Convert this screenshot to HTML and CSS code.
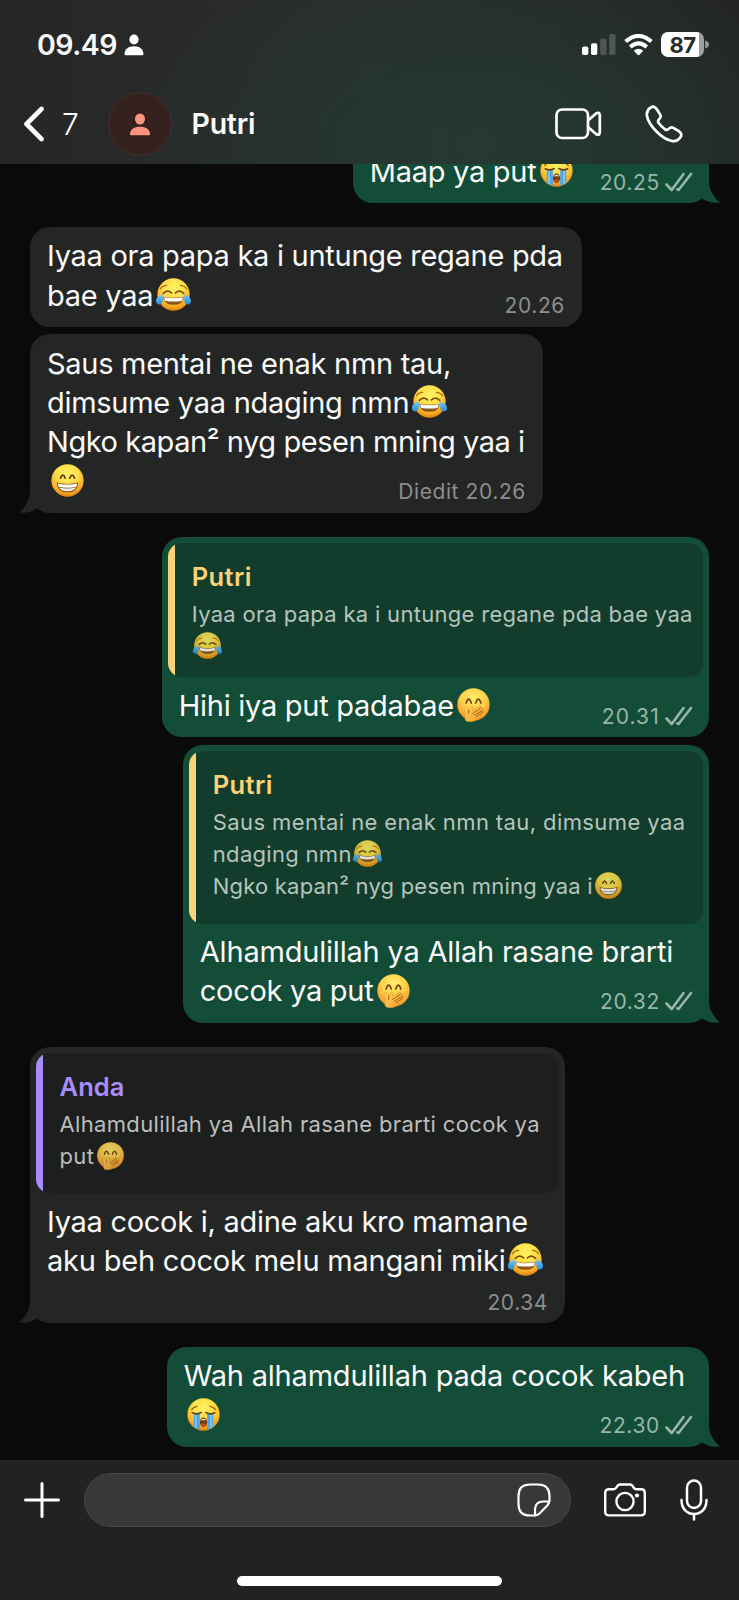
FILE: index.html
```html
<!DOCTYPE html>
<html lang="id">
<head>
<meta charset="utf-8">
<title>Putri</title>
<link rel="stylesheet" href="styles.css">
</head>
<body>
<svg class="defs" width="0" height="0" aria-hidden="true">
  <defs>
    <radialGradient id="face" cx=".5" cy=".3" r=".72">
      <stop offset="0" stop-color="#fff265"/><stop offset=".45" stop-color="#ffdf48"/><stop offset=".8" stop-color="#f9ab22"/><stop offset="1" stop-color="#d97b0c"/>
    </radialGradient>
    <radialGradient id="blush" cx=".5" cy=".3" r=".74">
      <stop offset="0" stop-color="#ffee70"/><stop offset=".5" stop-color="#ffd149"/><stop offset=".85" stop-color="#f99d30"/><stop offset="1" stop-color="#e2720f"/>
    </radialGradient>
    <linearGradient id="tear" x1="0" y1="0" x2="0" y2="1">
      <stop offset="0" stop-color="#72c8f5"/><stop offset="1" stop-color="#268fdc"/>
    </linearGradient>
    <linearGradient id="hand" x1="0" y1="0" x2="1" y2="1">
      <stop offset="0" stop-color="#ffd65c"/><stop offset="1" stop-color="#f39a2b"/>
    </linearGradient>
  </defs>
  <symbol id="joy" viewBox="0 0 36 36">
    <circle cx="18" cy="18" r="16.6" fill="url(#face)"/>
    <path d="M4.5 12.2Q7 8.6 11 8.6M31.500 12.200Q29 8.600 25 8.600" fill="none" stroke="#a96b12" stroke-width="1.200" stroke-linecap="round"/>
    <path d="M7.500 16.800Q11.500 12.500 16 16.300M28.500 16.800Q24.500 12.500 20 16.300" fill="none" stroke="#7d4a10" stroke-width="1.700" stroke-linecap="round"/>
    <path d="M7.500 20.200Q18 22.500 28.500 20.200Q28 28.600 18 28.600Q8 28.600 7.500 20.200Z" fill="#8d5418"/>
    <path d="M8.500 20.900Q18 23 27.500 20.900Q27.300 23.900 26.300 24.600Q18 26 9.700 24.600Q8.600 23.700 8.500 20.900Z" fill="#fff"/>
    <path d="M7 18.200C3 18.500 0 21.500 0 25C0 28 3.600 29.500 5.700 27.200C7.600 25 7 21.500 7 18.200Z" fill="url(#tear)"/>
    <path d="M29 18.200C33 18.500 36 21.500 36 25C36 28 32.400 29.500 30.300 27.200C28.400 25 29 21.500 29 18.200Z" fill="url(#tear)"/>
  </symbol>
  <symbol id="grin" viewBox="0 0 36 36">
    <circle cx="18" cy="18" r="16.600" fill="url(#face)"/>
    <path d="M10.800 15.500Q13.300 9.500 15.600 15.500M20.400 15.500Q22.700 9.500 25.200 15.500" fill="none" stroke="#6b3c0b" stroke-width="1.800" stroke-linecap="round"/>
    <path d="M6.800 20Q18 23 29.200 20Q28.700 30.300 18 30.300Q7.300 30.300 6.800 20Z" fill="#8d5517"/>
    <path d="M8.200 21Q18 23.400 27.800 21L27.400 24.300Q18 26.400 8.600 24.300Z" fill="#fff"/>
    <path d="M9.200 25.200Q18 27.200 26.800 25.200Q25 29 18 29Q11 29 9.200 25.200Z" fill="#f1eee9"/>
  </symbol>
  <symbol id="giggle" viewBox="0 0 36 36">
    <circle cx="18" cy="18" r="16.600" fill="url(#blush)"/>
    <path d="M10.400 16.500Q13 8.500 15.700 16.500M20.300 16.500Q23 8.500 25.600 16.500" fill="none" stroke="#7a430f" stroke-width="1.700" stroke-linecap="round"/>
    <path d="M10.500 35C8.600 33.500 9 29.500 9.300 26.500C8.300 23.500 8 20.600 9.500 20.200C11 20 12 22 13 24C14 20.500 16.500 19 17.500 20.300C18.300 21.300 16.800 22.700 17 24L24 19.800C25.800 19.200 26.500 20.800 25 22L27 21.500C28.500 21.500 28.600 23 27.400 23.800C28.600 24 28.500 25.400 27.400 26C27.800 26.800 27.300 27.800 26 28.300C24 31.800 21 34.500 17.500 35.400C15 36 12.500 36 10.500 35Z" fill="url(#hand)" stroke="#e08a20" stroke-width=".5"/>
    <path d="M17 27.300L25 22M19 29L27.400 23.900M20.500 30.700L27 26.100M13 24Q13.500 26 13 27" fill="none" stroke="#a8600f" stroke-width="1" stroke-linecap="round"/>
  </symbol>
  <symbol id="sob" viewBox="0 0 36 36">
    <circle cx="18" cy="18" r="16.600" fill="url(#face)"/>
    <path d="M8 17.500H14.200V33.700Q11 32.900 8 30.600Z" fill="#4da6e8"/>
    <path d="M28 17.500H21.800V33.700Q25 32.900 28 30.600Z" fill="#4da6e8"/>
    <path d="M10.300 18V31.500M25.700 18V31.500" stroke="#80c5f3" stroke-width="1.800"/>
    <path d="M5.800 13Q7.500 10.200 11.500 9.700M30.200 13Q28.500 10.200 24.500 9.700" fill="none" stroke="#94600f" stroke-width="1.300" stroke-linecap="round"/>
    <path d="M6.500 16.300Q11 18.500 15.500 16M29.500 16.300Q25 18.500 20.500 16" fill="none" stroke="#6b3c0b" stroke-width="1.700" stroke-linecap="round"/>
    <ellipse cx="18" cy="26" rx="3.700" ry="4.800" fill="#733a12"/>
    <path d="M15.200 24Q18 20.800 20.800 24Z" fill="#fff"/>
    <ellipse cx="18" cy="28.600" rx="2.400" ry="1.500" fill="#c4502a"/>
  </symbol>
  <symbol id="ticks" viewBox="0 0 28 20">
    <path d="M1.500 12.500L6.700 18L18.500 2M12.300 17.300L13.500 18L26 2" fill="none" stroke="currentColor" stroke-width="2.600" stroke-linecap="round" stroke-linejoin="round"/>
  </symbol>
  <symbol id="tail" viewBox="0 0 26 26">
    <path d="M15 0V5C15.500 13 19.500 20 26 25.600C17.500 26.300 11.500 24.300 7.500 20.900L0 8Z" fill="currentColor"/>
  </symbol>
</svg>

<div class="screen">
  <header class="top">
    <div class="status">
      <div class="clock">
        <span class="time">09.49</span>
        <svg width="20" height="22" viewBox="0 0 20 22" fill="#fff"><ellipse cx="10" cy="5.500" rx="4.600" ry="5"/><path d="M.5 20C.8 15 4.500 12.300 10 12.300S19.200 15 19.500 20Q19.500 21.300 18.200 21.300H1.800Q.5 21.300 .5 20Z"/></svg>
      </div>
      <div class="signals">
        <svg width="34" height="22" viewBox="0 0 34 22"><g fill="#fff"><rect x="0" y="12.500" width="6.300" height="8.500" rx="1.800"/><rect x="9" y="9.200" width="6.300" height="11.800" rx="1.800"/></g><g fill="#4f5754"><rect x="18.200" y="4.500" width="6.300" height="16.500" rx="1.800"/><rect x="27.200" y="0" width="6.300" height="21" rx="1.800"/></g></svg>
        <svg class="wifi" width="29" height="22" viewBox="0 0 29 22"><g fill="none" stroke="#fff" stroke-width="4"><path d="M1.600 7.600Q14.500 -3.800 27.400 7.600"/><path d="M6.300 12.900Q14.500 5.900 22.700 12.900"/></g><path d="M9.800 16.700Q14.500 12.700 19.200 16.700L15.500 20.800Q14.500 21.700 13.500 20.800Z" fill="#fff"/></svg>
        <div class="battery"><span>87</span></div>
        <svg width="4" height="9" viewBox="0 0 4 9"><path d="M0 .5Q4 1.500 4 4.500T0 8.500Z" fill="#8c9390"/></svg>
      </div>
    </div>
    <div class="nav">
      <svg class="back" width="22" height="36" viewBox="0 0 22 36"><path d="M18.500 3L3.500 18L18.500 33" fill="none" stroke="#fff" stroke-width="4.600" stroke-linecap="round" stroke-linejoin="round"/></svg>
      <span class="unread">7</span>
      <div class="avatar"><svg width="22" height="23" viewBox="0 0 22 23" fill="#fb947c"><ellipse cx="11" cy="6" rx="5" ry="5.500"/><path d="M1 21C1 16.500 5 13.800 11 13.800S21 16.500 21 21Q21 22.300 19.800 22.300H2.200Q1 22.300 1 21Z"/></svg></div>
      <h1 class="name">Putri</h1>
      <svg class="video" width="47" height="32" viewBox="0 0 47 32" fill="none" stroke="#fff" stroke-width="2.700" stroke-linejoin="round"><rect x="1.500" y="1.500" width="31.500" height="28.500" rx="5.500"/><path d="M33 12.500L41 5.500Q44.500 3.500 44.800 7V24.500Q44.500 28 41 26L33 19"/></svg>
      <svg class="phone" width="38" height="38" viewBox="0 0 38 38" fill="none" stroke="#fff" stroke-width="2.700" stroke-linejoin="round"><path d="M5.500 2.700C8 .8 10.200 1.700 12 4.500L15.200 9.600C16.300 11.400 15.700 12.700 14.300 14C12.900 15.300 12.500 16.200 13.500 17.800C15.300 20.400 17.600 22.700 20.200 24.500C21.800 25.500 22.700 25.100 24 23.700C25.300 22.300 26.600 21.700 28.400 22.800L33.500 26C36.300 27.800 37.200 30 35.300 32.500C33.500 35 30.700 36.700 27 36C22.500 35.200 16.800 31.900 11.500 26.500C6 21 2.800 15.500 2 11C1.300 7.300 3 4.500 5.500 2.700Z"/></svg>
    </div>
  </header>

  <main class="chat">
    <section class="bubble out w1 first">
      <div class="body">
        <p class="text"><span class="line">Maap ya put<svg class="emoji" role="img" aria-label="😭"><use href="#sob"/></svg></span></p>
        <div class="meta">20.25<svg class="ticks"><use href="#ticks"/></svg></div>
      </div>
      <svg class="tail"><use href="#tail"/></svg>
    </section>

    <section class="bubble in w2">
      <div class="body">
        <p class="text"><span class="line">Iyaa ora papa ka i untunge regane pda</span><span class="line">bae yaa<svg class="emoji" role="img" aria-label="😂"><use href="#joy"/></svg></span></p>
        <div class="meta">20.26</div>
      </div>
    </section>

    <section class="bubble in w3 joined">
      <div class="body">
        <p class="text"><span class="line">Saus mentai ne enak nmn tau,</span><span class="line">dimsume yaa ndaging nmn<svg class="emoji" role="img" aria-label="😂"><use href="#joy"/></svg></span><span class="line snug">Ngko kapan² nyg pesen mning yaa i</span><span class="line"><svg class="emoji" role="img" aria-label="😁"><use href="#grin"/></svg></span></p>
        <div class="meta">Diedit 20.26</div>
      </div>
      <svg class="tail"><use href="#tail"/></svg>
    </section>

    <section class="bubble out w4">
      <blockquote class="quote tight">
        <h2>Putri</h2>
        <p><span>Iyaa ora papa ka i untunge regane pda bae yaa</span><span><svg class="emoji" role="img" aria-label="😂"><use href="#joy"/></svg></span></p>
      </blockquote>
      <div class="body">
        <p class="text"><span class="line">Hihi iya put padabae<svg class="emoji" role="img" aria-label="🤭"><use href="#giggle"/></svg></span></p>
        <div class="meta wide">20.31<svg class="ticks"><use href="#ticks"/></svg></div>
      </div>
    </section>

    <section class="bubble out w5 joined">
      <blockquote class="quote">
        <h2>Putri</h2>
        <p><span class="airy">Saus mentai ne enak nmn tau, dimsume yaa</span><span>ndaging nmn<svg class="emoji" role="img" aria-label="😂"><use href="#joy"/></svg></span><span class="snug">Ngko kapan² nyg pesen mning yaa i<svg class="emoji" role="img" aria-label="😁"><use href="#grin"/></svg></span></p>
      </blockquote>
      <div class="body">
        <p class="text"><span class="line airy">Alhamdulillah ya Allah rasane brarti</span><span class="line">cocok ya put<svg class="emoji" role="img" aria-label="🤭"><use href="#giggle"/></svg></span></p>
        <div class="meta">20.32<svg class="ticks"><use href="#ticks"/></svg></div>
      </div>
      <svg class="tail"><use href="#tail"/></svg>
    </section>

    <section class="bubble in w6">
      <blockquote class="quote mine">
        <h2>Anda</h2>
        <p><span>Alhamdulillah ya Allah rasane brarti cocok ya</span><span>put<svg class="emoji" role="img" aria-label="🤭"><use href="#giggle"/></svg></span></p>
      </blockquote>
      <div class="body stacked">
        <p class="text"><span class="line">Iyaa cocok i, adine aku kro mamane</span><span class="line airy">aku beh cocok melu mangani miki<svg class="emoji" role="img" aria-label="😂"><use href="#joy"/></svg></span></p>
        <div class="meta">20.34</div>
      </div>
      <svg class="tail"><use href="#tail"/></svg>
    </section>

    <section class="bubble out w7">
      <div class="body">
        <p class="text"><span class="line airy">Wah alhamdulillah pada cocok kabeh</span><span class="line"><svg class="emoji" role="img" aria-label="😭"><use href="#sob"/></svg></span></p>
        <div class="meta">22.30<svg class="ticks"><use href="#ticks"/></svg></div>
      </div>
      <svg class="tail"><use href="#tail"/></svg>
    </section>
  </main>

  <footer class="composer">
    <div class="tools">
      <svg width="36" height="36" viewBox="0 0 36 36"><path d="M18 1.500V34.500M1.500 18H34.500" stroke="#fff" stroke-width="3" stroke-linecap="round"/></svg>
      <div class="input">
        <svg width="34" height="34" viewBox="0 0 34 34" fill="none" stroke="#fff" stroke-width="2.200" stroke-linecap="round" stroke-linejoin="round"><path d="M15.500 32.500H13Q1.500 32.500 1.500 21V13Q1.500 1.500 13 1.500H21Q32.500 1.500 32.500 13V17Q32.500 20 30.500 22.300L22.500 30.500Q20.300 32.500 17.500 32.500Z"/><path d="M18 32.500V26Q18.500 18.700 26 18.500H32.200"/></svg>
      </div>
      <svg class="camera" width="42" height="34" viewBox="0 0 42 34" fill="none" stroke="#fff" stroke-width="2.400" stroke-linejoin="round"><path d="M5 6.200H9.500Q11.300 6.200 12.300 4.700L13.600 2.800Q14.500 1.500 16 1.500H26Q27.500 1.500 28.400 2.800L29.700 4.700Q30.700 6.200 32.500 6.200H37Q40.800 6.200 40.800 10V28.600Q40.800 32.400 37 32.400H5Q1.200 32.400 1.200 28.600V10Q1.200 6.200 5 6.200Z"/><circle cx="21" cy="18.500" r="8.600"/><circle cx="33" cy="12.500" r="2.100" fill="#fff" stroke="none"/></svg>
      <svg class="mic" width="28" height="42" viewBox="0 0 28 42" fill="none" stroke="#fff" stroke-width="2.500" stroke-linecap="round"><rect x="7" y="1.500" width="14" height="27.500" rx="7"/><path d="M1.500 21C1.500 29.500 6.500 35 14 35S26.500 29.500 26.500 21M14 35V40.500"/></svg>
    </div>
    <div class="home"></div>
  </footer>
</div>
</body>
</html>
```

FILE: styles.css
```css
* { box-sizing: border-box; }
body, h1, h2, p, blockquote { margin: 0; }
body { background: #0a0a0a; color: #fafafa; font-family: Inter, "Liberation Sans", sans-serif; }
svg { display: block; flex: none; }
.defs { position: absolute; }

.screen { width: 739px; height: 1600px; display: flex; flex-direction: column; overflow: hidden; }

.top {
  height: 164px;
  flex: none;
  position: relative;
  z-index: 1;
  background:
    radial-gradient(ellipse 370px 210px at 480px 145px, rgba(37, 58, 49, .95), rgba(36, 54, 47, .7) 45%, rgba(36, 46, 42, 0)),
    linear-gradient(90deg, #262626 0%, #2b2d2c 50%, #232424 100%);
}
.status { display: flex; justify-content: space-between; height: 89px; padding: 0 30px 0 37px; align-items: center; }
.clock { display: flex; align-items: center; gap: 7px; }
.time { font-size: 28.500px; font-weight: 600; letter-spacing: -.5px; }
.signals { display: flex; align-items: center; }
.wifi { margin: 0 8px; }
.battery {
  width: 43px;
  height: 25px;
  margin-right: 1px;
  border-radius: 7px;
  background: linear-gradient(90deg, #fff 38px, #9da19f 38px);
  display: flex;
  align-items: center;
  justify-content: center;
  color: #272b29;
  font-size: 22px;
  font-weight: 700;
  letter-spacing: -.5px;
}
.nav { display: flex; align-items: center; height: 70px; padding-left: 23px; }
.unread { font-size: 30px; font-weight: 350; margin-left: 17px; width: 46px; }
.avatar { width: 64px; height: 64px; border-radius: 50%; border: 1px solid #403330; background: #35211e; display: grid; place-items: center; }
.name { font-size: 28.500px; line-height: 36px; font-weight: 600; letter-spacing: -.25px; margin-left: 19.500px; flex: 1; }
.video { margin-right: 43px; }
.phone { margin-right: 56.500px; }

.chat { flex: 1; min-height: 0; display: flex; flex-direction: column; padding: 0 30.200px 0 30px; }
.bubble { position: relative; flex: none; border-radius: 20px; margin-top: 24px; }
.bubble.in { align-self: flex-start; background: #242626; color: #fafafa; }
.bubble.out { align-self: flex-end; background: #144d37; color: #fafafa; }
.bubble.first { margin-top: -21px; }
.bubble.joined { margin-top: 7.500px; }
.w1 { width: 356px; }
.w2 { width: 552px; }
.w3 { width: 513px; }
.w4 { width: 547px; }
.w5 { width: 526px; }
.w6 { width: 535px; }
.w7 { width: 542px; }

.body { display: grid; padding: 9px 16px 12px 17px; }
.text, .meta { grid-area: 1 / 1; }
.line { display: flex; align-items: center; height: 39.300px; font-size: 29px; letter-spacing: -.28px; white-space: nowrap; }
.line.snug { letter-spacing: -.44px; }
.line.airy { letter-spacing: -.2px; }
.emoji { width: 35px; height: 35px; margin: 0 2px; }
.line .emoji { margin: -1.500px 2px 0 2.500px; }
.in .meta { margin-right: 1px; }
.meta {
  align-self: end;
  justify-self: end;
  display: flex;
  align-items: center;
  gap: 5px;
  margin-bottom: -4.500px;
  font-size: 21px;
  line-height: 26px;
  letter-spacing: .6px;
  color: #8c8e8e;
}
.meta.wide { letter-spacing: 1.100px; }
.out .meta { color: #97b5a8; }
.ticks { width: 28px; height: 20px; margin-bottom: 2px; }
.stacked .meta { grid-area: 2 / 1; margin-top: 9.500px; }

.quote { margin: 0 6px; padding: 16.400px 10px 21px 24px; border-radius: 14px; background: linear-gradient(90deg, #fbd277 7px, #123c2c 7px); }
.bubble:has(.quote) { padding-top: 6px; }
.quote + .body { padding-top: 8.500px; }
.quote.tight { padding-bottom: 15.400px; }
.quote.mine { background: linear-gradient(90deg, #a78dfa 7px, #1d1f1e 7px); }
.mine h2, .mine p { margin-left: -.5px; }
.quote h2 { font-size: 25.500px; line-height: 36px; font-weight: 600; color: #fbd277; letter-spacing: .35px; margin-bottom: 2.500px; }
.quote.mine h2 { color: #a78dfa; letter-spacing: .1px; }
.quote p { font-size: 22px; letter-spacing: .3px; color: #b5c4bd; }
.quote.mine p { color: #bcbdbd; letter-spacing: .34px; }
.quote p span { display: flex; align-items: center; height: 32.300px; white-space: nowrap; }
.quote p .snug { letter-spacing: .2px; }
.quote p .airy { letter-spacing: .4px; }
.quote .emoji { width: 29px; height: 29px; opacity: .85; margin: -1px 1.500px 0; }

.tail { position: absolute; width: 26px; height: 26px; right: -11px; bottom: 0; color: #144d37; }
.in .tail { right: auto; left: -11px; transform: scaleX(-1); color: #242626; }

.composer { flex: none; height: 140.500px; background: #222; padding-top: 13.500px; display: flex; flex-direction: column; align-items: center; }
.tools { display: flex; align-items: center; align-self: stretch; height: 54px; padding-left: 24px; }
.input { width: 487px; height: 54px; margin-left: 24px; padding-right: 19px; border: 1px solid #474747; border-radius: 27px; background: #383838; display: flex; align-items: center; justify-content: flex-end; }
.camera { margin-left: 33px; }
.mic { margin-left: 34px; }
.home { width: 265px; height: 10px; margin-top: 48.500px; border-radius: 5px; background: #fff; }
```
